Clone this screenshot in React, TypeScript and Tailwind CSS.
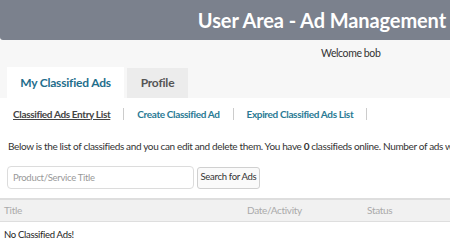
import React from "react";

export default function App() {
  const font = { fontFamily: "Lato, 'Open Sans', sans-serif" };
  return (
    <div className="w-[450px] h-[246px] overflow-hidden bg-white text-[#333]" style={font}>
      <div className="h-[40px] bg-[#7b818d] flex items-center justify-end pr-[4px] rounded-bl-[3px]">
        <h1 className="text-white font-bold text-[20px] leading-none tracking-[-0.1px]">User Area - Ad Management</h1>
      </div>
      <div className="h-[58px] bg-[#f7f7f7] flex flex-col">
        <div className="h-[28px] flex items-center pl-[321px] text-[10.5px] tracking-[-0.4px] text-[#333]">Welcome bob</div>
        <div className="flex items-end h-[30px] pl-[7px] gap-[3px]">
          <div className="h-[31px] w-[117px] bg-white flex items-center justify-center text-[12px] tracking-[-0.2px] font-bold text-[#1f6e8c]">My Classified Ads</div>
          <div className="h-[30px] w-[61px] bg-[#ececec] flex items-center justify-center text-[12px] tracking-[-0.2px] font-bold text-[#555]">Profile</div>
        </div>
      </div>
      <div className="flex items-center h-[32px] pl-[13px] text-[10px] tracking-[-0.35px] font-bold">
        <span className="underline text-[#444]">Classified Ads Entry List</span>
        <span className="mx-[13px] w-px h-[12px] bg-[#ccc]" />
        <span className="text-[#2a7a94]">Create Classified Ad</span>
        <span className="mx-[13px] w-px h-[12px] bg-[#ccc]" />
        <span className="text-[#2a7a94]">Expired Classified Ads List</span>
        <span className="mx-[13px] w-px h-[12px] bg-[#ccc]" />
      </div>
      <div className="pl-[8px] mt-[8px] h-[16px] text-[10px] tracking-[-0.35px] whitespace-nowrap overflow-hidden leading-[16px] text-[#333]">
        Below is the list of classifieds and you can edit and delete them. You have <b>0</b> classifieds online. Number of ads w
      </div>
      <div className="flex items-center pl-[7px] gap-[3px] mt-[12px]">
        <input
          className="w-[187px] h-[23px] border border-[#dcdcdc] rounded-[4px] px-[5px] text-[9.5px] tracking-[-0.3px] outline-none placeholder:text-[#999]"
          placeholder="Product/Service Title"
          style={font}
        />
        <button className="h-[22px] w-[63px] border border-[#d0d0d0] rounded-[3px] bg-[#fafafa] text-[9.5px] tracking-[-0.3px] text-[#333]" style={font}>
          Search for Ads
        </button>
      </div>
      <div className="mt-[9px] h-[24px] bg-[#f1f1f1] border-t-2 border-b border-[#dedede] flex items-center text-[10px] tracking-[-0.3px] text-[#aaa]">
        <div className="w-[247px] pl-[4px]">Title</div>
        <div className="w-[120px]">Date/Activity</div>
        <div>Status</div>
      </div>
      <div className="pl-[4px] pt-[6px] text-[9.5px] tracking-[-0.3px] text-[#222]">No Classified Ads!</div>
    </div>
  );
}
